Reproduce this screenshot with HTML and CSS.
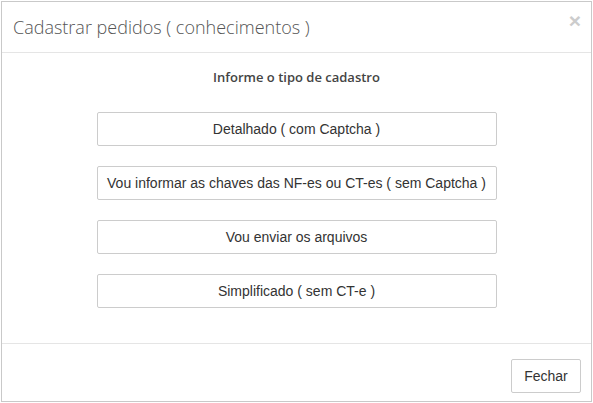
FILE: index.html
```html
<!DOCTYPE html>
<html lang="pt-BR">
<head>
<meta charset="utf-8">
<title>Cadastrar pedidos</title>
<link rel="stylesheet" href="styles.css">
</head>
<body>
<div class="modal">
  <div class="modal-header">
    <h4 class="modal-title">Cadastrar pedidos ( conhecimentos )</h4>
    <button class="close" type="button" aria-label="Fechar">×</button>
  </div>
  <div class="modal-body">
    <p class="prompt">Informe o tipo de cadastro</p>
    <div class="options">
      <button class="btn btn-option" type="button">Detalhado ( com Captcha )</button>
      <button class="btn btn-option" type="button">Vou informar as chaves das NF-es ou CT-es ( sem Captcha )</button>
      <button class="btn btn-option" type="button">Vou enviar os arquivos</button>
      <button class="btn btn-option" type="button">Simplificado ( sem CT-e )</button>
    </div>
  </div>
  <div class="modal-footer">
    <button class="btn btn-close" type="button">Fechar</button>
  </div>
</div>
</body>
</html>
```
FILE: styles.css
```css
html, body {
  margin: 0;
  padding: 0;
  background: #ffffff;
}

body {
  padding: 1px;
  font-family: "Open Sans", "Liberation Sans", sans-serif;
}

.modal {
  box-sizing: border-box;
  width: 591px;
  height: 401px;
  border: 1px solid #c9c9c9;
  background: #fff;
  display: flex;
  flex-direction: column;
}

.modal-header {
  box-sizing: border-box;
  height: 51px;
  border-bottom: 1px solid #e5e5e5;
  display: flex;
  align-items: flex-start;
  justify-content: space-between;
  padding: 0 10px 0 11px;
}

.modal-title {
  margin: 0;
  padding-top: 14px;
  font-family: "Open Sans", sans-serif;
  font-weight: 300;
  font-size: 18px;
  line-height: 22px;
  color: #555;
}

.close {
  margin: 0;
  padding: 0;
  margin-top: 8px;
  border: 0;
  background: transparent;
  font-family: "Liberation Sans", Arial, sans-serif;
  font-weight: bold;
  font-size: 21px;
  line-height: 21px;
  color: #cccccc;
}

.modal-body {
  flex: 1;
  display: flex;
  flex-direction: column;
  align-items: center;
  border-bottom: 1px solid #e5e5e5;
}

.prompt {
  margin: 14px 0 25px;
  font-family: "Open Sans", sans-serif;
  font-weight: 600;
  font-size: 13px;
  line-height: 20px;
  color: #444;
}

.options {
  display: flex;
  flex-direction: column;
  gap: 20px;
}

.btn {
  box-sizing: border-box;
  border: 1px solid #cccccc;
  border-radius: 2px;
  background: #fff;
  font-family: "Liberation Sans", Arial, sans-serif;
  font-size: 14px;
  color: #333;
  white-space: nowrap;
}

.btn-option {
  width: 400px;
  height: 34px;
  padding: 0;
}

.modal-footer {
  box-sizing: border-box;
  height: 57px;
  display: flex;
  justify-content: flex-end;
  padding: 15px 10px 0 0;
}

.btn-close {
  width: 70px;
  height: 34px;
  padding: 0;
}
```
